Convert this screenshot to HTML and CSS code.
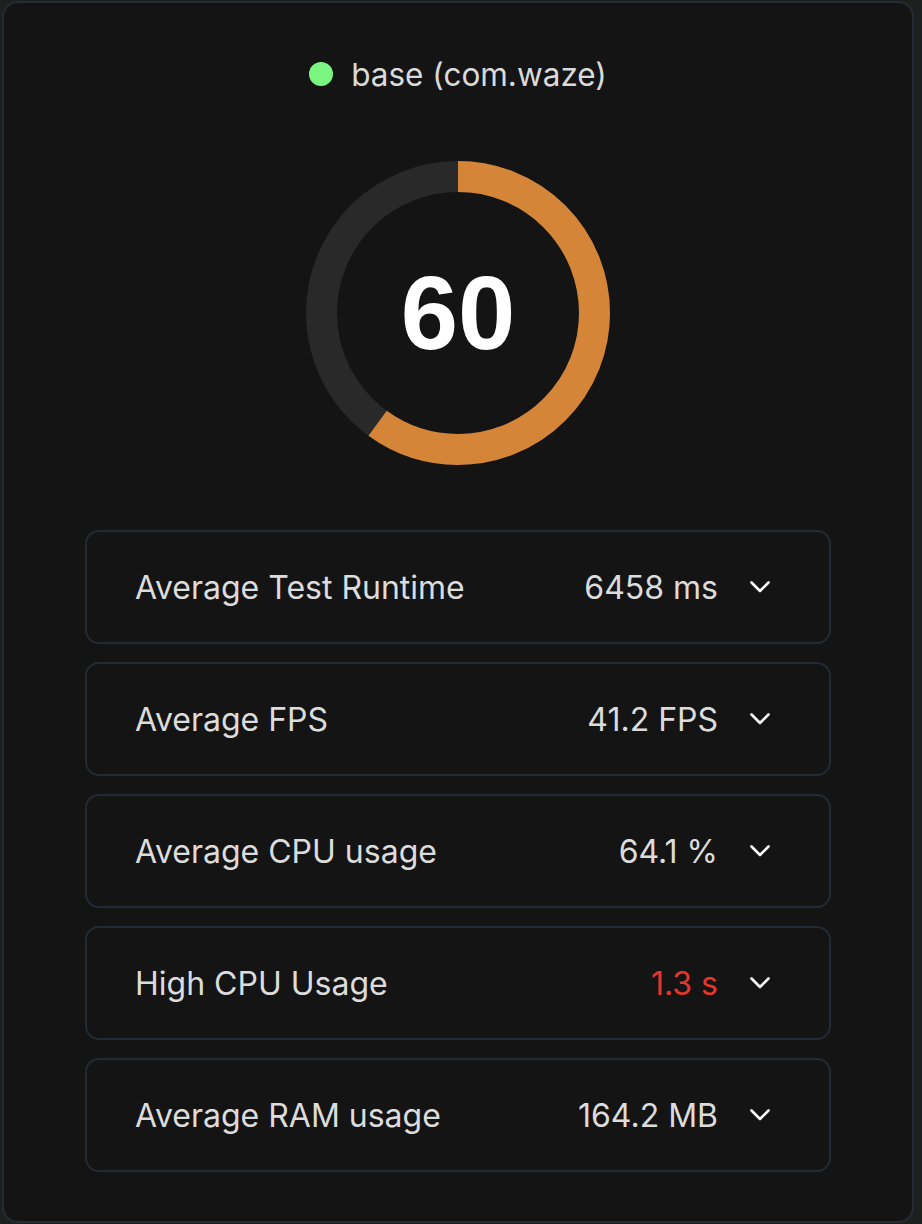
FILE: index.html
```html
<!DOCTYPE html>
<html lang="en">
<head>
<meta charset="utf-8">
<title>Performance score</title>
<link rel="stylesheet" href="styles.css">
</head>
<body>
<div class="card">
  <div class="header">
    <span class="dot"></span>
    <span class="app-name">base (com.waze)</span>
  </div>
  <div class="gauge">
    <svg class="gauge-svg" width="304" height="304" viewBox="0 0 304 304">
      <circle cx="152" cy="152" r="136.5" fill="none" stroke="#292929" stroke-width="31"/>
      <circle cx="152" cy="152" r="136.5" fill="none" stroke="#d58537" stroke-width="31"
        stroke-dasharray="514.6 1000" transform="rotate(-90 152 152)"/>
    </svg>
    <div class="score">60</div>
  </div>
  <div class="metrics">
    <div class="metric">
      <span class="label">Average Test Runtime</span>
      <span class="value">6458 ms</span>
      <svg class="chev" width="20" height="12" viewBox="0 0 20 12"><path d="M1.5 1.5 L10 10 L18.5 1.5" fill="none" stroke="#fff" stroke-width="2.6" stroke-linecap="round" stroke-linejoin="round"/></svg>
    </div>
    <div class="metric">
      <span class="label">Average FPS</span>
      <span class="value">41.2 FPS</span>
      <svg class="chev" width="20" height="12" viewBox="0 0 20 12"><path d="M1.5 1.5 L10 10 L18.5 1.5" fill="none" stroke="#fff" stroke-width="2.6" stroke-linecap="round" stroke-linejoin="round"/></svg>
    </div>
    <div class="metric">
      <span class="label">Average CPU usage</span>
      <span class="value">64.1 %</span>
      <svg class="chev" width="20" height="12" viewBox="0 0 20 12"><path d="M1.5 1.5 L10 10 L18.5 1.5" fill="none" stroke="#fff" stroke-width="2.6" stroke-linecap="round" stroke-linejoin="round"/></svg>
    </div>
    <div class="metric">
      <span class="label">High CPU Usage</span>
      <span class="value bad">1.3 s</span>
      <svg class="chev" width="20" height="12" viewBox="0 0 20 12"><path d="M1.5 1.5 L10 10 L18.5 1.5" fill="none" stroke="#fff" stroke-width="2.6" stroke-linecap="round" stroke-linejoin="round"/></svg>
    </div>
    <div class="metric">
      <span class="label">Average RAM usage</span>
      <span class="value">164.2 MB</span>
      <svg class="chev" width="20" height="12" viewBox="0 0 20 12"><path d="M1.5 1.5 L10 10 L18.5 1.5" fill="none" stroke="#fff" stroke-width="2.6" stroke-linecap="round" stroke-linejoin="round"/></svg>
    </div>
  </div>
</div>
</body>
</html>
```

FILE: styles.css
```css
html, body {
  margin: 0;
  padding: 0;
}
body {
  background: #1c211f;
  font-family: Inter, "Noto Sans", sans-serif;
  color: #dcdcdc;
}
.card {
  box-sizing: border-box;
  width: 912px;
  height: 1222px;
  margin: 1px 0 0 2px;
  background: #141414;
  border: 2px solid #252b35;
  border-radius: 16px;
  padding-top: 51px;
  display: flex;
  flex-direction: column;
  align-items: center;
}
.header {
  display: flex;
  align-items: center;
  gap: 18px;
  height: 40px;
}
.dot {
  width: 24px;
  height: 24px;
  border-radius: 50%;
  background: #7af57f;
}
.app-name {
  font-size: 31.5px;
  color: #dadada;
}
.gauge {
  margin-top: 67px;
  width: 304px;
  height: 304px;
  display: grid;
  place-items: center;
}
.gauge-svg, .score {
  grid-area: 1 / 1;
}
.score {
  font-family: "Liberation Sans", Arial, sans-serif;
  font-weight: bold;
  font-size: 103px;
  color: #ffffff;
  line-height: 1;
}
.metrics {
  margin-top: 65px;
  width: 746px;
  display: flex;
  flex-direction: column;
  gap: 18px;
}
.metric {
  box-sizing: border-box;
  height: 114px;
  border: 2px solid #232a34;
  border-radius: 14px;
  display: flex;
  align-items: center;
  padding: 0 59px 0 48px;
  font-size: 32px;
}
.label {
  flex: 1;
  color: #dcdcdc;
}
.value {
  color: #dcdcdc;
}
.value.bad {
  color: #e8352a;
}
.chev {
  margin-left: 32px;
}
```
